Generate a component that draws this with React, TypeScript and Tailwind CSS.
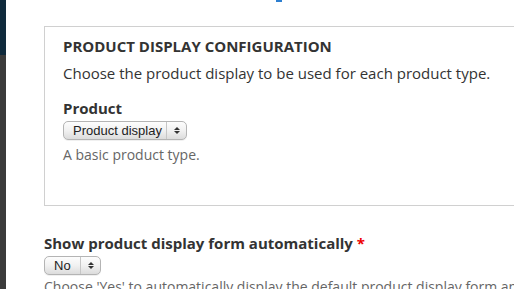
// Product display settings form (Drupal admin style)

function MacSelect({ label, width }: { label: string; width: string }) {
  return (
    <div
      className={`flex h-[19px] ${width} items-center rounded-[5px] border border-[#b4b4b4] bg-gradient-to-b from-[#fdfdfd] via-[#f1f1f1] to-[#dcdcdc] shadow-[0_1px_0_rgba(0,0,0,0.06)]`}
    >
      <span className="flex-1 pl-[9px] font-['Liberation_Sans',Arial,sans-serif] text-[13px] leading-none text-[#222]">
        {label}
      </span>
      <span className="flex h-full w-[20px] flex-col items-center justify-center gap-[1px] border-l border-[#c6c6c6]">
        <svg width="6" height="3" viewBox="0 0 6 3">
          <path d="M0 3 L3 0 L6 3 Z" fill="#333" />
        </svg>
        <svg width="6" height="3" viewBox="0 0 6 3">
          <path d="M0 0 L3 3 L6 0 Z" fill="#333" />
        </svg>
      </span>
    </div>
  );
}

export default function App() {
  return (
    <div className="flex h-[289px] w-[514px] overflow-hidden bg-white font-['Open_Sans',sans-serif] text-[#333]">
      {/* left rail */}
      <div className="flex w-[6px] shrink-0 flex-col">
        <div className="h-[55px] bg-[#0f2a3c]" />
        <div className="flex-1 bg-[#3b3b3b]" />
      </div>

      <div className="relative min-w-0 flex-1 pl-[38px]">
        {/* top accent */}
        <div className="absolute left-[270px] top-0 h-[2px] w-[6px] bg-[#2d7fd0]" />

        <div className="mt-[26px] -mr-[10px] h-[180px] border border-[#d0d0d0] pl-[18px] pt-[9px]">
          <div className="text-[15px] font-bold leading-[20px] text-[#333]">
            PRODUCT DISPLAY CONFIGURATION
          </div>
          <p className="mt-[7px] text-[15px] leading-[20px] text-[#333]">
            Choose the product display to be used for each product type.
          </p>
          <div className="mt-[15px] text-[15px] font-bold leading-[20px] text-[#333]">Product</div>
          <div className="mt-[3px]">
            <MacSelect label="Product display" width="w-[124px]" />
          </div>
          <p className="mt-[6px] text-[14px] leading-[18px] text-[#666]">A basic product type.</p>
        </div>

        <div className="mt-[27px] text-[15px] font-bold leading-[20px] text-[#333]">
          Show product display form automatically <span className="text-[#e00]">*</span>
        </div>
        <div className="mt-[3px]">
          <MacSelect label="No" width="w-[57px]" />
        </div>
        <p className="mt-[3px] whitespace-nowrap text-[14px] leading-[18px] text-[#666]">
          Choose 'Yes' to automatically display the default product display form and
        </p>
      </div>
    </div>
  );
}
